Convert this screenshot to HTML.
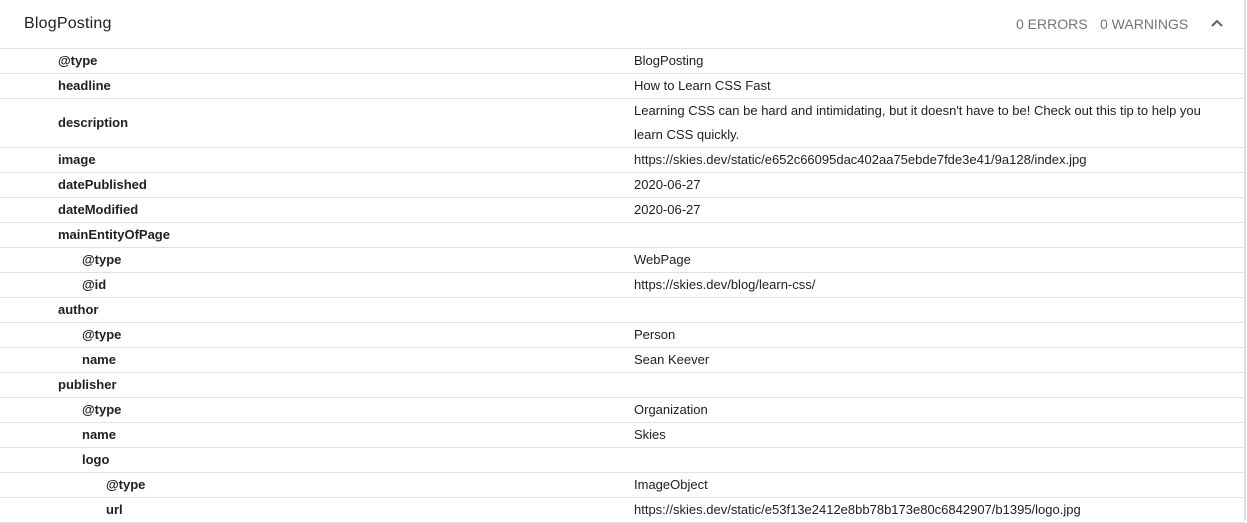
<!DOCTYPE html>
<html><head><style>
body{margin:0;background:#fff;font-family:"Liberation Sans",Roboto,sans-serif;width:1247px;height:521px;overflow:hidden;position:relative}
.vl{position:absolute;left:1244px;top:0;width:2px;height:521px;background:#e0e0e0}
.hd{position:absolute;left:0;top:0;width:1244px;height:48px;border-bottom:1px solid #e0e0e0}
.t{position:absolute;left:24px;top:15px;font-size:16px;color:#212121;letter-spacing:.2px}
.c{position:absolute;top:16px;font-size:14px;color:#757575;letter-spacing:0}
.row{position:absolute;left:0;width:1244px;border-bottom:1px solid #e0e0e0;font-size:13px;color:#212121}
.k{position:absolute;font-weight:bold;top:0}
.v{position:absolute;left:634px;top:0}
</style></head><body>
<div class="vl"></div>
<div class="hd"><div class="t">BlogPosting</div>
<div class="c" style="left:1016px">0 ERRORS</div>
<div class="c" style="left:1100px">0 WARNINGS</div>
<svg style="position:absolute;left:1210px;top:18px" width="14" height="10" viewBox="0 0 14 10"><path d="M2 8L7 3L12 8" stroke="#616161" stroke-width="2" fill="none"/></svg>
</div>
<div id="rows"></div>
<script>
var d=[["@type","BlogPosting",0],["headline","How to Learn CSS Fast",0],["description","Learning CSS can be hard and intimidating, but it doesn't have to be! Check out this tip to help you<br>learn CSS quickly.",0,1],["image","https://skies.dev/static/e652c66095dac402aa75ebde7fde3e41/9a128/index.jpg",0],["datePublished","2020-06-27",0],["dateModified","2020-06-27",0],["mainEntityOfPage","",0],["@type","WebPage",1],["@id","https://skies.dev/blog/learn-css/",1],["author","",0],["@type","Person",1],["name","Sean Keever",1],["publisher","",0],["@type","Organization",1],["name","Skies",1],["logo","",1],["@type","ImageObject",2],["url","https://skies.dev/static/e53f13e2412e8bb78b173e80c6842907/b1395/logo.jpg",2]];
var y=49,h="";
d.forEach(function(r){var hh=r[3]?48:24;
h+='<div class="row" style="top:'+y+'px;height:'+hh+'px;line-height:24px"><div class="k" style="left:'+(58+24*r[2])+'px;'+(r[3]?'top:12px':'')+'">'+r[0]+'</div><div class="v">'+r[1]+'</div></div>';y+=hh+1;});
document.getElementById('rows').innerHTML=h;
</script>
</body></html>
